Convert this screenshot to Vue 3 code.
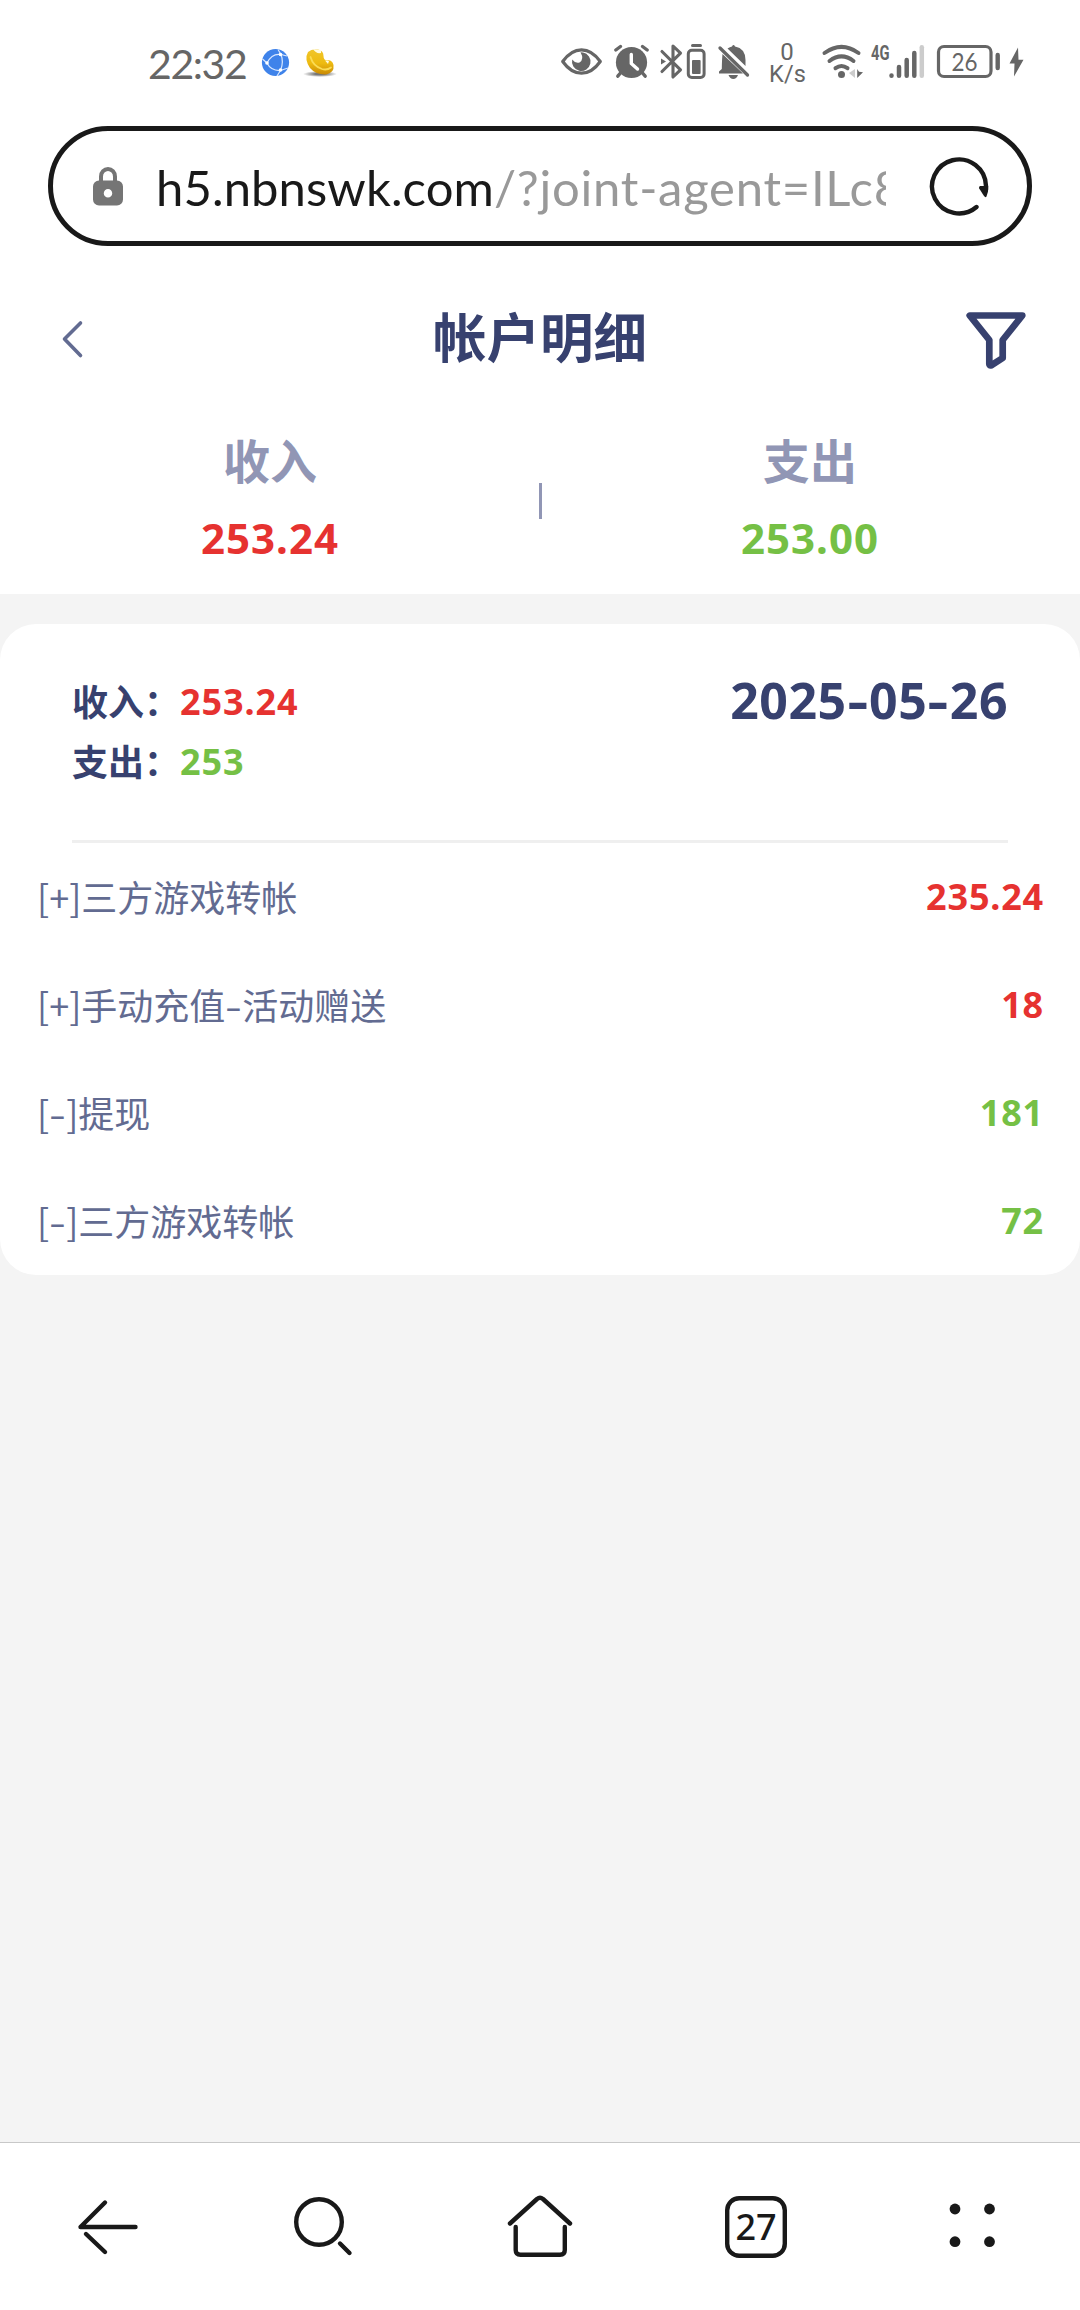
<script setup>
const groups = [
  {
    date: '2025-05-26',
    income: '253.24',
    expense: '253',
    rows: [
      { label: '[+]三方游戏转帐', amount: '235.24', kind: 'in' },
      { label: '[+]手动充值-活动赠送', amount: '18', kind: 'in' },
      { label: '[-]提现', amount: '181', kind: 'out' },
      { label: '[-]三方游戏转帐', amount: '72', kind: 'out' },
    ],
  },
]

// Hyphens are set wider than the font's own, so they get their own span.
const parts = (text) => text.split(/(-)/)
</script>

<template>
  <div class="screen">
    <header class="status">
      <span class="clock">22:32</span>
      <svg class="app-icons" width="90" height="40" viewBox="256 42 90 40">
        <circle cx="275.5" cy="62.5" r="13.6" fill="#3f83ea" />
        <g fill="none" stroke="#d9e8ff" stroke-width="1.2">
          <path d="M267 63Q272 53 281 54.500Q284 62 280.500 70.500Q271 71 267 63M267 63L262.500 59M281 54.500L278 49.500M281 54.500L287 56M280.500 70.500L288 68M280.500 70.500L277 76" />
        </g>
        <g fill="#fff"><circle cx="267" cy="63" r="1.800" /><circle cx="280.500" cy="54.500" r="1.800" /><circle cx="280.500" cy="70" r="1.800" /></g>
        <defs>
          <linearGradient id="gold" x1="0" y1="0" x2="0" y2="1">
            <stop offset="0" stop-color="#f0c62c" /><stop offset=".55" stop-color="#eebb10" /><stop offset="1" stop-color="#c98a05" />
          </linearGradient>
          <radialGradient id="shade"><stop offset=".3" stop-color="#777" /><stop offset="1" stop-color="#777" stop-opacity="0" /></radialGradient>
        </defs>
        <ellipse cx="320" cy="74" rx="17" ry="3" fill="url(#shade)" />
        <path d="M308 52Q312 48.500 318 49.500Q323.500 50.500 323.500 56Q323.500 60 327 60.500Q332 59.500 333.500 65Q334.500 73 326 74.500Q316 75 310 68Q304 59 308 52Z" fill="url(#gold)" />
        <path d="M310.500 57Q313 66 322 69Q327 70.500 331 67.500" fill="none" stroke="#fbdc55" stroke-width="1.800" stroke-linecap="round" />
        <path d="M313 49L321 50L321 53Q316 54 313 49ZM325 60.500L329 61L328 64Z" fill="#fffbe0" />
      </svg>
      <svg class="sys-icons" width="490" height="60" viewBox="556 32 490 60" fill="none" stroke="#666" stroke-linecap="round" stroke-linejoin="round">
        <!-- eye comfort -->
        <path d="M562.700 61.500Q571 49.800 581.500 49.800T600.300 61.500Q592 73.200 581.500 73.200T562.700 61.500Z" stroke-width="3.200" />
        <path d="M583 52.500A9.300 9.300 0 1 1 572.200 59.500Q575.500 63.800 579.500 62.500Q584.500 59.500 580.500 52.300Z" fill="#666" stroke="none" />
        <!-- alarm -->
        <circle cx="631.500" cy="62.500" r="15.600" fill="#666" stroke="none" />
        <path d="M615.800 50L620.500 46.500M647.200 50L642.500 46.500M620.500 73L617.800 76.200M642.500 73L645.200 76.200" stroke-width="3.400" />
        <path d="M631.300 54.500V63.500L637.500 69" stroke="#fff" stroke-width="3.400" />
        <!-- bluetooth and its battery -->
        <path d="M662 51.500L680.500 69.800L673 77V46L680.500 53.200L662 71.500" stroke-width="3.100" />
        <path d="M661 58.500L666 61.500L661 64.500Z" fill="#666" stroke="none" />
        <path d="M692.500 45.600H700.500" stroke-width="3" />
        <rect x="688.300" y="50.200" width="15.800" height="27.200" rx="3.500" stroke-width="3" />
        <rect x="692" y="60" width="8.600" height="14" rx="1" fill="#666" stroke="none" />
        <!-- muted bell -->
        <path d="M727.500 48.500Q730 46.800 732 46.500Q733.500 43.600 735 46.500Q745.500 48.500 745.500 60V66ZM722.500 54L743 73.500H719V71.500L721.800 69Q722 58 722.500 54ZM728.500 75H738Q736.500 79 733.300 79T728.500 75Z" fill="#666" stroke="none" />
        <path d="M720 48L747.500 75" stroke-width="3.300" />
        <!-- network speed -->
        <g fill="#666" stroke="none" font-family="Roboto, sans-serif" text-anchor="middle">
          <text x="787" y="59.800" font-size="24">0</text>
          <text x="787.500" y="82" font-size="23.500" textLength="37">K/s</text>
        </g>
        <!-- wifi -->
        <path d="M824.500 53Q841.500 40.800 858.500 53M829.500 61Q841.500 51.800 853.500 61M835.500 68.200Q841.500 63.800 847.500 68.200" stroke-width="4" />
        <circle cx="841.500" cy="74.500" r="3.500" fill="#666" stroke="none" />
        <path d="M855 69V78L849 73Z" fill="#ccc" stroke="none" />
        <path d="M857.200 69V78L863 72.300L859 71.800Z" fill="#666" stroke="none" />
        <!-- mobile signal -->
        <text x="871" y="60" font-family="Roboto, sans-serif" font-size="20" font-weight="700" fill="#666" stroke="none" textLength="18.500" lengthAdjust="spacingAndGlyphs">4G</text>
        <path d="M891.500 75.500V75.700M899 67V75.700M906.700 60V75.700M914.300 53V75.700" stroke-width="4.500" />
        <path d="M921.800 47.200V75.700" stroke="#ccc" stroke-width="4.500" />
        <!-- battery -->
        <rect x="938.500" y="46.500" width="52.500" height="30" rx="5.500" stroke-width="3.200" />
        <path d="M997.700 55V68" stroke-width="4.400" />
        <text x="964.500" y="70.800" font-family="Lato, sans-serif" font-size="24.500" fill="#666" stroke="none" text-anchor="middle" textLength="26" lengthAdjust="spacingAndGlyphs">26</text>
        <path d="M1018 47.500L1009.500 63.500H1014.500L1014 76.500L1023.500 59.800H1018.500Z" fill="#666" stroke="none" />
      </svg>
    </header>

    <div class="address">
      <svg class="lock" width="30" height="40" viewBox="0 0 30 40">
        <path d="M8 18V10.500A7 7.500 0 0 1 22 10.500V18" fill="none" stroke="#757575" stroke-width="4" />
        <path fill-rule="evenodd" d="M6 14.500H24A6 6 0 0 1 30 20.500V33.500A6 6 0 0 1 24 39.500H6A6 6 0 0 1 0 33.500V20.500A6 6 0 0 1 6 14.500ZM15 23A4 4 0 0 0 15 31.500A4 4 0 0 0 15 23Z" fill="#757575" />
      </svg>
      <div class="url"><span class="host">h5.nbnswk.com</span><span class="path">/?joint-agent=ILc8</span></div>
      <svg class="reload" width="64" height="64" viewBox="928 154 64 64">
        <path d="M977.500 207A27 27 0 1 1 987 186V190" fill="none" stroke="#191919" stroke-width="4.400" stroke-linecap="round" />
        <path d="M981 186H989.200Q989.500 192 987.500 196.500Q986.500 198 985 196L980.200 188.500Q979.500 186.500 981 186Z" fill="#191919" />
      </svg>
    </div>

    <nav class="titlebar">
      <svg width="64" height="60" viewBox="43 309 64 60"><path d="M80.500 323L64.500 339L80.500 355.500" fill="none" stroke="#626b91" stroke-width="3.600" stroke-linecap="round" stroke-linejoin="round" /></svg>
      <h1>帐户明细</h1>
      <svg width="64" height="60" viewBox="964 309 64 60"><path d="M969.700 315.500H1022.300L1002.700 340V358L991.200 365.300Q989.300 366 989.300 364V340Z" fill="none" stroke="#37416f" stroke-width="6.700" stroke-linejoin="round" /></svg>
    </nav>

    <section class="summary">
      <div class="total"><span class="caption">收入</span><span class="figure in">253.24</span></div>
      <i class="bar"></i>
      <div class="total"><span class="caption">支出</span><span class="figure out">253.00</span></div>
    </section>

    <main class="content">
      <article v-for="g in groups" :key="g.date" class="card">
        <div class="day">
          <div>
            <p class="line"><span class="name">收入：</span><b class="in">{{ g.income }}</b></p>
            <p class="line"><span class="name">支出：</span><b class="out">{{ g.expense }}</b></p>
          </div>
          <time class="date"><span v-for="(p, i) in parts(g.date)" :key="i" :class="{ dash: p === '-' }">{{ p }}</span></time>
        </div>
        <div v-for="r in g.rows" :key="r.label" class="row">
          <span class="label"><span v-for="(p, i) in parts(r.label)" :key="i" :class="{ dash: p === '-' }">{{ p }}</span></span>
          <span class="amount" :class="r.kind">{{ r.amount }}</span>
        </div>
      </article>
    </main>

    <footer class="tools">
      <svg width="216" height="80" viewBox="0 2187 216 80"><path d="M135.500 2227H80.500L105 2202.500M86 2234L105 2252" /></svg>
      <svg width="216" height="80" viewBox="216 2187 216 80"><circle cx="319" cy="2222" r="22.800" /><path d="M340 2243.500L349.500 2253" /></svg>
      <svg width="216" height="80" viewBox="432 2187 216 80"><path d="M510 2223.500L537 2199Q540 2196.700 543 2199L570 2223.500M515.700 2227V2250Q515.700 2254.700 520.500 2254.700H560Q564.800 2254.700 564.800 2250V2227" /></svg>
      <svg width="216" height="80" viewBox="648 2187 216 80"><rect x="727.200" y="2198.200" width="57.600" height="57.600" rx="12" /><text x="756" y="2239.500" text-anchor="middle" textLength="41">27</text></svg>
      <svg width="216" height="80" viewBox="864 2187 216 80"><g fill="#191919" stroke="none"><circle cx="955" cy="2209" r="5.400" /><circle cx="989.500" cy="2209" r="5.400" /><circle cx="955" cy="2241.700" r="5.400" /><circle cx="989.500" cy="2241.700" r="5.400" /></g></svg>
    </footer>
  </div>
</template>

<style>
body { margin: 0; background: #f4f4f4; }
</style>

<style scoped>
.screen {
  width: 1080px;
  height: 2310px;
  display: flex;
  flex-direction: column;
  overflow: hidden;
  background: #fff;
  font-family: 'Noto Sans', 'Noto Sans CJK SC', sans-serif;
}
svg { display: block; flex: none; }
.in { color: #e63230; }
.out { color: #75c045; }

.status {
  height: 126px;
  flex: none;
  display: flex;
  align-items: flex-start;
  color: #666;
}
.clock {
  width: 108px;
  margin-left: 148px;
  padding-top: 43px;
  font: 400 41px/42px Lato, sans-serif;
  letter-spacing: -1.400px;
  white-space: nowrap;
}
.app-icons { margin-top: 42px; }
.sys-icons { margin: 32px 0 0 210px; }

.address {
  box-sizing: border-box;
  height: 120px;
  flex: none;
  margin: 0 48px;
  padding: 0 36px 0 40px;
  display: flex;
  align-items: center;
  border: 5px solid #191919;
  border-radius: 60px;
}
.url {
  width: 733px;
  margin: 2px 0 0 32px;
  padding-left: 1px;
  box-sizing: border-box;
  overflow: hidden;
  white-space: nowrap;
  font: 400 49px/70px Lato, sans-serif;
}
.host { color: #191919; letter-spacing: 0.1px; }
.path { color: #999; letter-spacing: 0.75px; }
.reload { margin-left: 41px; }

.titlebar {
  height: 174px;
  flex: none;
  box-sizing: border-box;
  padding: 63px 52px 0 43px;
  display: flex;
  justify-content: space-between;
  align-items: flex-start;
}
h1 {
  margin: -4px 0 0 9px;
  font: 700 53.500px/60px 'Noto Sans CJK SC', sans-serif;
  color: #37416f;
}

.summary {
  height: 174px;
  flex: none;
  display: flex;
}
.total {
  flex: 1;
  display: flex;
  flex-direction: column;
  align-items: center;
}
.caption {
  padding-top: 9px;
  font: 700 47px/60px 'Noto Sans CJK SC', sans-serif;
  color: #9196b5;
}
.figure {
  margin-top: 19px;
  font-size: 42px;
  line-height: 60px;
  font-weight: 700;
  letter-spacing: 1px;
}
.bar {
  width: 3px;
  height: 36px;
  margin: 63px -2px 0 -1px;
  background: #9196b5;
}

.content {
  flex: 1;
  padding-top: 30px;
  background: #f4f4f4;
}
.card {
  border-radius: 36px;
  background: #fff;
}
.day {
  box-sizing: border-box;
  height: 219px;
  margin: 0 72px;
  padding-top: 48px;
  display: flex;
  justify-content: space-between;
  border-bottom: 3px solid #efefef;
}
.line {
  display: flex;
  margin: 0;
  line-height: 60px;
  color: #37416f;
}
.name {
  height: 60px;
  margin-top: -2px;
  font: 700 36px/60px 'Noto Sans CJK SC', sans-serif;
}
.line b {
  font-size: 36px;
  font-weight: 700;
  letter-spacing: 0.900px;
}
.date {
  display: flex;
  margin-top: -2px;
  font-size: 50px;
  line-height: 60px;
  font-weight: 700;
  letter-spacing: 0.5px;
  color: #37416f;
}
.date .dash { width: 22.500px; text-align: center; transform: scaleX(1.3); }
.row {
  height: 108px;
  padding: 0 36px;
  display: flex;
  align-items: center;
  justify-content: space-between;
}
.label {
  display: flex;
  margin-top: -2px;
  padding-left: 1px;
  font: 400 36px/54px 'Noto Sans CJK SC', sans-serif;
  color: #626b91;
}
.label .dash { width: 17px; text-align: center; transform: scaleX(1.35); }
.amount {
  font-size: 36px;
  line-height: 54px;
  font-weight: 700;
  letter-spacing: 0.800px;
}

.tools {
  box-sizing: border-box;
  height: 168px;
  flex: none;
  padding-top: 44px;
  display: flex;
  border-top: 1px solid #c8c8c8;
  background: #fff;
}
.tools svg {
  fill: none;
  stroke: #191919;
  stroke-width: 4.400px;
  stroke-linecap: round;
  stroke-linejoin: round;
}
.tools text {
  fill: #191919;
  stroke: none;
  font: 500 36px 'Noto Sans', sans-serif;
}
</style>
